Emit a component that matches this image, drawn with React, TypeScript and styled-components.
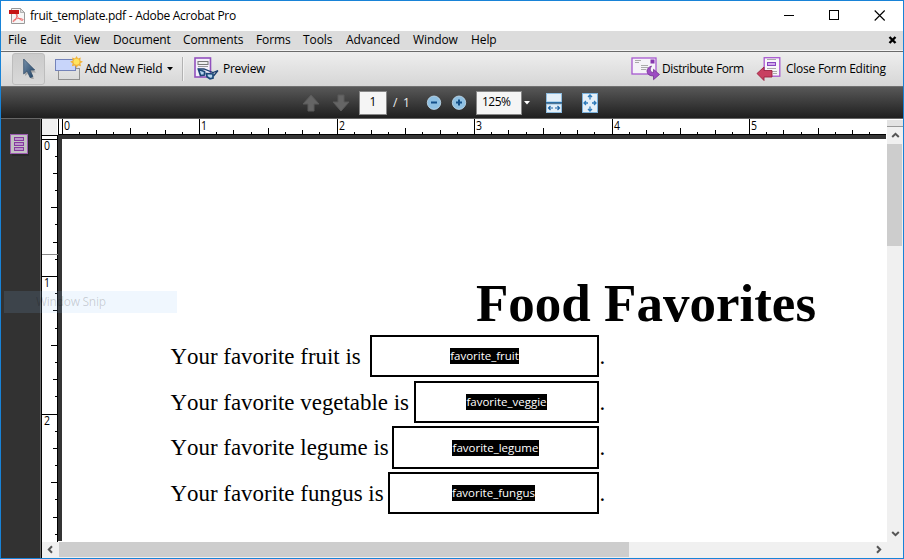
import React from "react";
import styled, { createGlobalStyle } from "styled-components";

const GlobalStyle = createGlobalStyle`
  * { box-sizing: border-box; }
  body { margin: 0; background: #fff; }
  svg { display: block; flex: none; }
`;

const Frame = styled.div`
  width: 904px;
  height: 559px;
  border: 1px solid #1883d7;
  background: #fff;
  display: flex;
  flex-direction: column;
  overflow: hidden;
  position: relative;
  font: 12px/16px "Open Sans", "Noto Sans", sans-serif;
  color: #000;
`;

const TitleBar = styled.header`
  height: 30px;
  flex: none;
  display: flex;
  align-items: center;
  padding: 0 17px 1px 7px;
`;

const Label = styled.span<{ $width?: number; $spacing?: number }>`
  width: ${(p) => (p.$width ? `${p.$width}px` : "auto")};
  letter-spacing: ${(p) => p.$spacing ?? 0}px;
  white-space: nowrap;
  flex: none;
  text-align: left;
`;

const Spacer = styled.div`
  flex: 1;
`;

const WindowButton = styled.span`
  display: flex;
  margin-left: 34px;
`;

const MenuBar = styled.nav`
  height: 21px;
  flex: none;
  display: flex;
  align-items: center;
  padding: 0 6px 3px 7px;
  background: linear-gradient(#dcdcdc 0 19px, #f3f3f3 19px 20px, #6a6a6a 20px);
`;

const ActionBar = styled.div`
  height: 34px;
  flex: none;
  display: flex;
  align-items: center;
  padding: 0 16px 0 11px;
  background: linear-gradient(#eee, #d6d6d6);
`;

const ToolButton = styled.button<{ $gap: number }>`
  border: 0;
  padding: 0;
  background: none;
  font: inherit;
  color: inherit;
  display: flex;
  align-items: center;
  gap: ${(p) => p.$gap}px;
  height: 32px;
`;

const SelectTool = styled.button`
  width: 33px;
  height: 32px;
  padding: 0 0 0 10px;
  border: 1px solid #bdbdbd;
  border-radius: 3px;
  background: linear-gradient(#cbcbcb, #d9d9d9);
  margin-right: 10px;
  display: flex;
  align-items: center;
`;

const Divider = styled.i`
  width: 2px;
  height: 24px;
  border-left: 1px solid #b2b2b2;
  border-right: 1px solid #f2f2f2;
  margin: 0 10px 0 9px;
`;

const NavBar = styled.div`
  height: 33px;
  flex: none;
  display: flex;
  align-items: center;
  padding-left: 300px;
  background: linear-gradient(#585858, #1f1f1f);
  border-top: 1px solid #707070;
  border-bottom: 1px solid #666;
  color: #eee;
`;

const ValueBox = styled.div<{ $width: number }>`
  width: ${(p) => p.$width}px;
  height: 24px;
  border: 1px solid #888;
  background: #f5f5f5;
  color: #000;
  display: flex;
  align-items: center;
  justify-content: center;
  padding-bottom: 2px;
  flex: none;
`;

const Gap = styled.i<{ $w: number }>`
  width: ${(p) => p.$w}px;
  flex: none;
`;

const Workspace = styled.div`
  flex: 1;
  display: flex;
  min-height: 0;
`;

const SidePanel = styled.aside`
  width: 41px;
  flex: none;
  background: #323232;
  border-right: 1px solid #000;
  box-shadow: inset -1px 0 #6a6a6a;
  padding: 15px 0 0 9px;
`;

const Viewer = styled.main`
  flex: 1;
  min-width: 0;
  display: grid;
  grid-template-columns: 17px 828px 16px;
  grid-template-rows: 16px 407px 16px;
`;

const Corner = styled.div`
  background: #f0f0f0;
  border-right: 1px solid #000;
  box-shadow: inset -1px 0 #fff;
`;

const Ruler = styled.svg`
  background: #fff;
  font: 12px "Open Sans", sans-serif;
  overflow: visible;
`;

const Canvas = styled.div`
  background: #343434;
  padding: 4px 0 0 3px;
  border-right: 1px solid #fff;
  border-bottom: 1px solid #fff;
`;

const Page = styled.article`
  background: #fff;
  height: 403px;
  overflow: hidden;
  padding: 132px 0 0 108.5px;
  font-family: "Liberation Serif", serif;
  font-kerning: none;
`;

const Heading = styled.h1`
  margin: 0 0 0 305.5px;
  height: 64px;
  font-size: 53px;
  line-height: 64px;
  font-weight: bold;
  white-space: nowrap;
`;

const FormRow = styled.div<{ $gap: number; $height: number }>`
  display: flex;
  width: 434.5px;
  margin-bottom: ${(p) => p.$gap}px;
  height: ${(p) => p.$height}px;
  font-size: 22.92px;
  line-height: 44px;
  white-space: nowrap;
`;

const Prompt = styled.span`
  flex: 1;
  min-width: 0;
`;

const Period = styled.span`
  width: 6px;
  flex: none;
  text-indent: 0.5px;
`;

const Field = styled.div<{ $width: number }>`
  width: ${(p) => p.$width}px;
  flex: none;
  border: 2px solid #000;
  display: flex;
  align-items: center;
  justify-content: center;
`;

const FieldName = styled.span<{ $width: number }>`
  width: ${(p) => p.$width}px;
  height: 16px;
  background: #000;
  color: #fff;
  font: 11.5px/15px "Open Sans", sans-serif;
  text-align: center;
`;

const VScroll = styled.div`
  grid-row: 1 / 3;
  grid-column: 3;
  display: flex;
  flex-direction: column;
  background: #f0f0f0;
`;

const SplitHandle = styled.div`
  height: 8px;
  flex: none;
  background: #e3e3e3;
  border-top: 1px solid #fff;
  border-bottom: 1px solid #999;
`;

const HScroll = styled.div`
  grid-column: 1 / 4;
  display: flex;
  background: #f0f0f0;
`;

const Thumb = styled.div<{ $w: number; $h: number }>`
  width: ${(p) => p.$w}px;
  height: ${(p) => p.$h}px;
  background: #cdcdcd;
  flex: none;
`;

const ScrollArrow = styled.span<{ $w: number; $h: number }>`
  width: ${(p) => p.$w}px;
  height: ${(p) => p.$h}px;
  display: flex;
  align-items: center;
  justify-content: center;
`;

const SnipGhost = styled.div`
  position: absolute;
  left: 3px;
  top: 290px;
  width: 173px;
  height: 22px;
  padding-left: 32px;
  line-height: 22px;
  letter-spacing: -0.27px;
  background: rgba(140, 196, 247, 0.13);
  color: rgba(0, 0, 0, 0.18);
`;

const menus: [string, number][] = [
  ["File", 32], ["Edit", 34], ["View", 39], ["Document", 70], ["Comments", 73],
  ["Forms", 47], ["Tools", 43], ["Advanced", 67], ["Window", 58], ["Help", 30],
];

const rows = [
  { word: "fruit", name: "favorite_fruit", width: 229, tag: 69, height: 42, gap: 4 },
  { word: "vegetable", name: "favorite_veggie", width: 185, tag: 81, height: 42, gap: 3 },
  { word: "legume", name: "favorite_legume", width: 207, tag: 87, height: 43, gap: 3 },
  { word: "fungus", name: "favorite_fungus", width: 211, tag: 83, height: 42, gap: 0 },
];

const INCH = 137.5;
const tickSize = (i: number) => (i % 8 === 0 ? 15 : i % 4 === 0 ? 6 : i % 2 === 0 ? 4 : 2);

const HRuler = () => (
  <Ruler width="828" height="16" shapeRendering="crispEdges">
    <rect x="0" y="15" width="827" height="1" />
    {Array.from({ length: 48 }, (_, i) => (
      <rect key={i} x={Math.floor(3 + (i * INCH) / 8)} y={15 - tickSize(i)} width="1" height={tickSize(i)} />
    ))}
    {[0, 1, 2, 3, 4, 5].map((n) => (
      <text key={n} x={Math.floor(3 + n * INCH) + 2} y="10.5" textLength="6" lengthAdjust="spacingAndGlyphs">{n}</text>
    ))}
  </Ruler>
);

const VRuler = () => (
  <Ruler width="17" height="407" shapeRendering="crispEdges">
    <rect x="15" width="1" height="407" />
    <rect x="16" width="1" height="406" fill="#343434" />
    <rect width="16" height="1" />
    {Array.from({ length: 24 }, (_, i) => (
      <rect key={i} x={15 - tickSize(i)} y={Math.floor(4 + (i * INCH) / 8)} width={tickSize(i)} height="1" />
    ))}
    <rect y="119" width="16" height="1" fill="#888" />
    {[0, 1, 2].map((n) => (
      <text key={n} x="2" y={Math.floor(4 + n * INCH) + 11} textLength="6" lengthAdjust="spacingAndGlyphs">{n}</text>
    ))}
  </Ruler>
);

const PdfIcon = () => (
  <svg width="18" height="18" viewBox="0 0 18 18">
    <path d="M3.500 1.500h9l4 4v11h-13z" fill="#f6f6f6" stroke="#999" />
    <path d="M12.500 1.500v4h4z" fill="#ddd" stroke="#999" strokeWidth=".7" />
    <path d="M8.500 6.500c1 0 .7 2.500-.5 5-1 2.500-2.500 3.500-3 3-.8-1 3-3 5.500-3s5 .5 4.500 1.500c-.6 1-3.500-.5-5-2.500s-2.400-4-1.500-4z" fill="none" stroke="#e66" />
    <rect x="1" y="3" width="10" height="4" fill="#c51414" />
  </svg>
);

const CursorIcon = () => (
  <svg width="14" height="23" viewBox="0 0 14 23">
    <defs>
      <linearGradient id="cur" x1="0" y1="0" x2="1" y2="1">
        <stop offset="0" stopColor="#7891ab" /><stop offset="1" stopColor="#1d4063" />
      </linearGradient>
    </defs>
    <path d="M2 3v15l3.200-2.500L8.500 21h2.500L8.500 14.500h4.500z" fill="#888" opacity=".6" />
    <path d="M.7 1v15l3.400-3.200L7.200 19.700l2.700-1.200-2.900-6.500h4.700z" fill="url(#cur)" stroke="#35526f" strokeWidth=".8" />
  </svg>
);

const AddFieldIcon = () => (
  <svg width="28" height="26" viewBox="0 0 28 26">
    <rect x="3.500" y="12.500" width="21" height="11" fill="none" stroke="#444" strokeDasharray="1 1" />
    <rect x=".5" y="3.500" width="20" height="11" fill="#c8d5fa" stroke="#7483b9" />
    <path d="M21.500 0l1.500 2.600 2.800-1-.6 3 2.800 1.200-2.600 1.400.6 3-3-.7-1.500 2.500-1.600-2.500-3 .7.700-3L15 5.800l2.800-1.400-.7-3 3 1z" fill="#f0b23a" />
    <circle cx="21.500" cy="5.800" r="3" fill="#ffe45e" />
  </svg>
);

const PreviewIcon = () => (
  <svg width="25" height="24" viewBox="0 0 25 24">
    <rect x="1" y="1" width="15.500" height="19" fill="#f3effa" stroke="#9250bd" strokeWidth="1.600" />
    <rect x="4" y="4.500" width="10" height="3" fill="#eee" stroke="#777" />
    <path d="M4 9.500h10" stroke="#999" />
    <path d="M4 12h6l9 3.500 5-2M19.500 19l4.500-5.500" fill="none" stroke="#1c3f6e" strokeWidth="1.300" />
    <path d="M4.500 12.500l6 2v3.500l-4 .5zM12.500 16.500l6.500.5v4l-3 .8-3-2z" fill="#b5d5ee" stroke="#1c4878" strokeWidth="1.700" />
  </svg>
);

const MailIcon = () => (
  <svg width="29" height="26" viewBox="0 0 29 26">
    <rect x="1" y="2" width="24" height="16" fill="#f5f3f8" stroke="#a758cf" strokeWidth="1.300" />
    <path d="M4 4.500h6M4 6.500h4M10 9.500h7M10 11.500h7M10 13.500h5" stroke="#aaa" />
    <rect x="19.500" y="3.500" width="4" height="4" fill="#8637ae" />
    <path d="M20.500 10c-3 1-4.800 3-4.500 5.500.4 3 2.800 4.500 6.500 4.500v3.700l6-5.200-6-5.200v3.200c-3.200-.2-4.200-3-2-6.500z" fill="#9d4cc2" stroke="#6b278b" strokeWidth=".7" />
  </svg>
);

const CloseFormIcon = () => (
  <svg width="26" height="26" viewBox="0 0 26 26">
    <rect x="8.200" y="1.700" width="15.600" height="18.500" fill="#f7f5f9" stroke="#a758cf" strokeWidth="1.300" />
    <rect x="11.500" y="6.500" width="8" height="3" fill="#cfa8ea" stroke="#8644c0" />
    <path d="M11 3.500h9M11 12.500h9M16 15.500h5M17 17.500h4" stroke="#aaa" />
    <path d="M1 17.500l7-6.500v3.500h8v6.500H8v3.500z" fill="#c84060" stroke="#9a2340" strokeWidth=".9" />
  </svg>
);

const Caret = ({ color }: { color: string }) => (
  <svg width="6" height="4" viewBox="0 0 6 4"><path d="M0 0h6L3 3.500z" fill={color} /></svg>
);

const PageArrow = ({ down }: { down?: boolean }) => (
  <svg width="20" height="18" viewBox="0 0 20 18">
    <path d={down ? "M7 1h6v7h5l-8 9-8-9h5z" : "M10 1l8 9h-5v7H7v-7H2z"} fill="#656565" stroke="#5b5b5b" />
  </svg>
);

const ZoomIcon = ({ plus }: { plus?: boolean }) => (
  <svg width="16" height="16" viewBox="0 0 16 16">
    <circle cx="8" cy="7.700" r="6.700" fill="#8fc0e2" stroke="#c5def0" strokeWidth=".8" />
    <path d={plus ? "M5 7.500h6M8 4.500v6" : "M5 7.500h6"} stroke="#134f88" strokeWidth="2" />
  </svg>
);

const FitWidthIcon = () => (
  <svg width="16" height="20" viewBox="0 0 16 20">
    <rect x=".5" y=".5" width="15" height="8.500" fill="#e4eff8" stroke="#8dbce0" />
    <rect x=".5" y="11" width="15" height="8.500" fill="#e4eff8" stroke="#8dbce0" />
    <rect x="0" y="9" width="16" height="1.300" fill="#2c6fa6" />
    <path d="M2.500 15h4.500M9 15h4.500M4.500 13l-2 2 2 2M11.500 13l2 2-2 2" fill="none" stroke="#1f66a5" strokeWidth="1.200" />
  </svg>
);

const FitPageIcon = () => (
  <svg width="16" height="20" viewBox="0 0 16 20">
    <rect x=".5" y=".5" width="15" height="19" fill="#e4eff8" stroke="#7cb2dc" />
    <path d="M8 2v4.500M6 4l2-2 2 2M8 13.500v4.500M6 16l2 2 2-2M2 10h4M4 8l-2 2 2 2M14 10h-4M12 8l2 2-2 2" fill="none" stroke="#2e7ab9" strokeWidth="1.300" />
  </svg>
);

const FieldsPanelIcon = () => (
  <svg width="20" height="22" viewBox="0 0 20 22">
    <rect x="2" y="2" width="17" height="20" fill="#222" opacity=".6" />
    <rect x=".5" y=".5" width="17" height="19" fill="#c2c2c2" stroke="#9c5bb0" />
    {[3.5, 8.5, 13.5].map((y) => (
      <rect key={y} x="4.500" y={y} width="9" height="3" fill="#bd94cc" stroke="#863a9f" />
    ))}
  </svg>
);

const Chevron = ({ turn }: { turn: number }) => (
  <svg width="9" height="9" viewBox="0 0 9 9">
    <path d="M1.200 6L4.500 2.800 7.800 6" fill="none" stroke="#555" strokeWidth="2" transform={`rotate(${turn} 4.5 4.5)`} />
  </svg>
);

export default function App() {
  return (
    <>
      <GlobalStyle />
      <Frame>
        <TitleBar>
          <PdfIcon />
          <Gap $w={4} />
          <Label $spacing={-0.28}>fruit_template.pdf - Adobe Acrobat Pro</Label>
          <Spacer />
          <WindowButton><svg width="11" height="11"><rect y="5" width="10" height="1" /></svg></WindowButton>
          <WindowButton><svg width="11" height="11"><rect x=".5" y=".5" width="9" height="9" fill="none" stroke="#000" /></svg></WindowButton>
          <WindowButton><svg width="12" height="11"><path d="M.7.5l10 10M10.700.5l-10 10" stroke="#000" strokeWidth="1.100" /></svg></WindowButton>
        </TitleBar>
        <MenuBar>
          {menus.map(([text, width]) => <Label key={text} $width={width} $spacing={-0.1}>{text}</Label>)}
          <Spacer />
          <svg width="9" height="8" viewBox="0 0 9 8"><path d="M1.500 1l6 6M7.500 1l-6 6" stroke="#000" strokeWidth="2.400" /></svg>
        </MenuBar>
        <ActionBar>
          <SelectTool><CursorIcon /></SelectTool>
          <ToolButton $gap={2}>
            <AddFieldIcon />
            <Label $width={80} $spacing={-0.2}>Add New Field</Label>
            <Caret color="#000" />
          </ToolButton>
          <Divider />
          <ToolButton $gap={4}>
            <PreviewIcon />
            <Label $width={43} $spacing={-0.25}>Preview</Label>
          </ToolButton>
          <Spacer />
          <ToolButton $gap={2}>
            <MailIcon />
            <Label $width={82} $spacing={-0.42}>Distribute Form</Label>
          </ToolButton>
          <Gap $w={12} />
          <ToolButton $gap={4}>
            <CloseFormIcon />
            <Label $width={101} $spacing={-0.25}>Close Form Editing</Label>
          </ToolButton>
        </ActionBar>
        <NavBar>
          <PageArrow />
          <Gap $w={10} />
          <PageArrow down />
          <Gap $w={8} />
          <ValueBox $width={28}>1</ValueBox>
          <Gap $w={6} />
          <Label $width={33} $spacing={1.3}>/ 1</Label>
          <ZoomIcon />
          <Gap $w={9} />
          <ZoomIcon plus />
          <Gap $w={9} />
          <ValueBox $width={46}><Label $width={34} $spacing={-0.5}>125%</Label></ValueBox>
          <Gap $w={2} />
          <Caret color="#fff" />
          <Gap $w={16} />
          <FitWidthIcon />
          <Gap $w={20} />
          <FitPageIcon />
        </NavBar>
        <Workspace>
          <SidePanel><FieldsPanelIcon /></SidePanel>
          <Viewer>
            <Corner />
            <HRuler />
            <VRuler />
            <Canvas>
              <Page>
                <Heading>Food Favorites</Heading>
                {rows.map((r) => (
                  <FormRow key={r.word} $gap={r.gap} $height={r.height}>
                    <Prompt>Your favorite {r.word} is</Prompt>
                    <Field $width={r.width}><FieldName $width={r.tag}>{r.name}</FieldName></Field>
                    <Period>.</Period>
                  </FormRow>
                ))}
              </Page>
            </Canvas>
            <VScroll>
              <SplitHandle />
              <ScrollArrow $w={16} $h={17}><Chevron turn={0} /></ScrollArrow>
              <Thumb $w={15} $h={102} />
              <Spacer />
              <ScrollArrow $w={16} $h={17}><Chevron turn={180} /></ScrollArrow>
            </VScroll>
            <HScroll>
              <ScrollArrow $w={17} $h={15}><Chevron turn={-90} /></ScrollArrow>
              <Thumb $w={570} $h={15} />
              <Spacer />
              <ScrollArrow $w={17} $h={15}><Chevron turn={90} /></ScrollArrow>
              <Gap $w={16} />
            </HScroll>
          </Viewer>
        </Workspace>
        <SnipGhost>Window Snip</SnipGhost>
      </Frame>
    </>
  );
}
